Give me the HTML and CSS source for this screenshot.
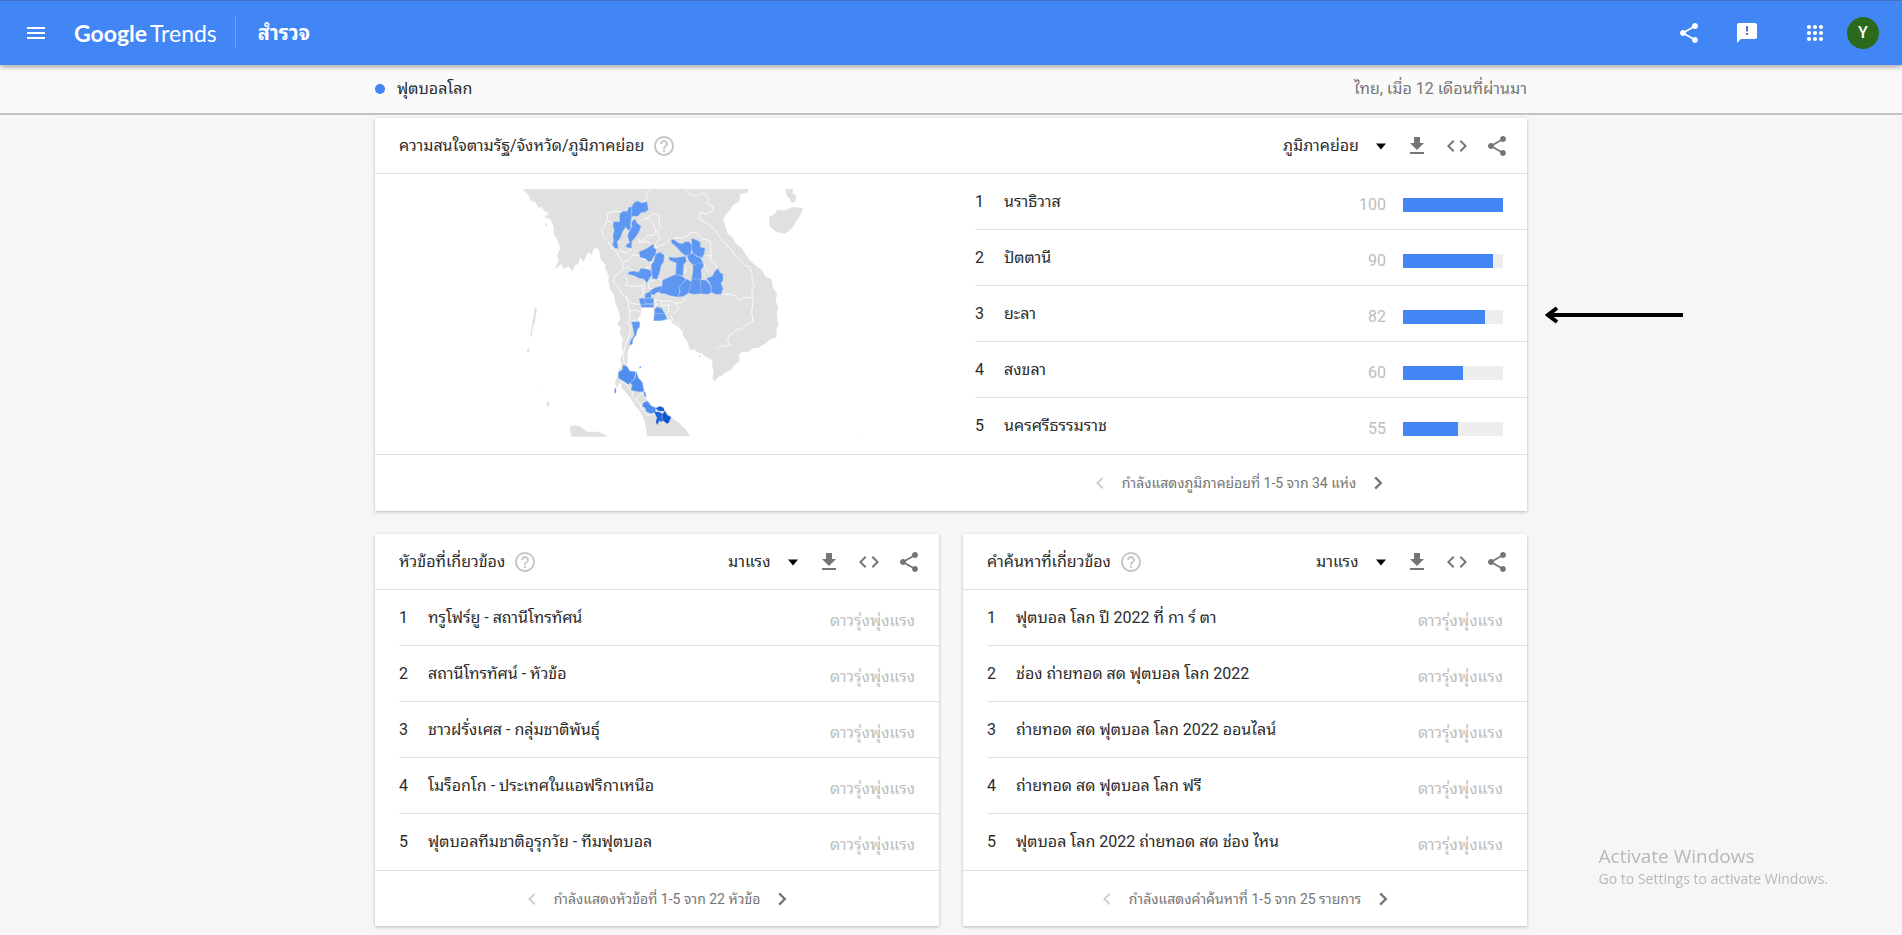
FILE: index.html
```html
<!DOCTYPE html>
<html lang="th">
<head>
<meta charset="utf-8">
<meta name="viewport" content="width=device-width, initial-scale=1">
<title>Google Trends - สำรวจ</title>
<link rel="stylesheet" href="styles.css">
</head>
<body>
<svg class="sprite" aria-hidden="true">
  <symbol id="share" viewBox="0 0 24 24"><path d="M18 16.08c-.76 0-1.44.3-1.96.77L8.91 12.7c.05-.23.09-.46.09-.7s-.04-.47-.09-.7l7.05-4.11c.54.5 1.25.81 2.04.81 1.66 0 3-1.34 3-3s-1.34-3-3-3-3 1.34-3 3c0 .24.04.47.09.7L8.04 9.81C7.5 9.31 6.79 9 6 9c-1.66 0-3 1.34-3 3s1.34 3 3 3c.79 0 1.5-.31 2.04-.81l7.12 4.16c-.05.21-.08.43-.08.65 0 1.61 1.31 2.92 2.92 2.92s2.92-1.31 2.92-2.92-1.31-2.92-2.92-2.92z"/></symbol>
  <symbol id="download" viewBox="0 0 24 24"><path d="M19 9h-4V3H9v6H5l7 7 7-7zM5 18v2h14v-2H5z"/></symbol>
  <symbol id="code" viewBox="0 0 24 24"><path d="M9.4 16.6L4.8 12l4.6-4.6L8 6l-6 6 6 6 1.4-1.4zm5.2 0l4.600-4.600-4.600-4.600L16 6l6 6-6 6-1.400-1.400z"/></symbol>
  <symbol id="help" viewBox="0 0 24 24"><path d="M11 18h2v-2h-2v2zm1-16C6.480 2 2 6.480 2 12s4.480 10 10 10 10-4.480 10-10S17.520 2 12 2zm0 18c-4.410 0-8-3.590-8-8s3.590-8 8-8 8 3.590 8 8-3.590 8-8 8zm0-14c-2.210 0-4 1.790-4 4h2c0-1.100.9-2 2-2s2 .9 2 2c0 2-3 1.750-3 5h2c0-2.250 3-2.500 3-5 0-2.210-1.790-4-4-4z"/></symbol>
  <symbol id="caret" viewBox="0 0 24 24"><path d="M7 9.500h10l-5 6z"/></symbol>
  <symbol id="prev" viewBox="0 0 24 24"><path d="M15.410 7.410L14 6l-6 6 6 6 1.410-1.410L10.830 12z"/></symbol>
  <symbol id="next" viewBox="0 0 24 24"><path d="M8.400 16.800L13.200 12 8.400 7.200 10 5.600l6.400 6.400-6.400 6.400z"/></symbol>
</svg>

<header class="topbar">
  <button class="icon-btn menu" aria-label="เมนู"><svg viewBox="0 0 24 24"><path d="M3 18h18v-2H3v2zm0-5h18v-2H3v2zm0-7v2h18V6H3z"/></svg></button>
  <a class="logo" href="#"><span class="logo-google">Google</span> <span class="logo-trends">Trends</span></a>
  <h1 class="section-name">สำรวจ</h1>
  <div class="topbar-actions">
    <button class="icon-btn" aria-label="แชร์"><svg viewBox="0 0 24 24"><use href="#share"/></svg></button>
    <button class="icon-btn feedback" aria-label="ส่งความคิดเห็น"><svg viewBox="0 0 24 24"><path d="M20 2H4c-1.100 0-1.990.9-1.990 2L2 22l4-4h14c1.100 0 2-.9 2-2V4c0-1.100-.9-2-2-2z"/><path class="mark" d="M11 5h2v5.500h-2zM11 12h2v2h-2z"/></svg></button>
    <button class="icon-btn apps" aria-label="แอป"><svg viewBox="0 0 24 24"><circle cx="6" cy="6" r="2.100"/><circle cx="12" cy="6" r="2.100"/><circle cx="18" cy="6" r="2.100"/><circle cx="6" cy="12" r="2.100"/><circle cx="12" cy="12" r="2.100"/><circle cx="18" cy="12" r="2.100"/><circle cx="6" cy="18" r="2.100"/><circle cx="12" cy="18" r="2.100"/><circle cx="18" cy="18" r="2.100"/></svg></button>
    <button class="avatar" aria-label="บัญชี">Y</button>
  </div>
</header>

<div class="subbar">
  <div class="subbar-inner">
    <span class="term"><span class="dot"></span>ฟุตบอลโลก</span>
    <span class="scope">ไทย, เมื่อ 12 เดือนที่ผ่านมา</span>
  </div>
</div>

<main class="content">
  <section class="card wide">
    <div class="card-head">
      <h2>ความสนใจตามรัฐ/จังหวัด/ภูมิภาคย่อย</h2>
      <button class="icon-btn help" aria-label="ความช่วยเหลือ"><svg viewBox="0 0 24 24"><use href="#help"/></svg></button>
      <div class="tools">
        <label class="picker"><select aria-label="ระดับพื้นที่"><option>ภูมิภาคย่อย</option></select><svg viewBox="0 0 24 24"><use href="#caret"/></svg></label>
        <button class="icon-btn" aria-label="ดาวน์โหลด"><svg viewBox="0 0 24 24"><use href="#download"/></svg></button>
        <button class="icon-btn" aria-label="ฝัง"><svg viewBox="0 0 24 24"><use href="#code"/></svg></button>
        <button class="icon-btn" aria-label="แชร์"><svg viewBox="0 0 24 24"><use href="#share"/></svg></button>
      </div>
    </div>
    <div class="split">
      <div class="map">
        <svg viewBox="0 0 1080 810" role="img" aria-label="แผนที่ประเทศไทย">
          <g class="land">
            <path d="M42 30H720L714 42 694 45 692 66 672 78 664 92 652 105 642 122 650 145 657 165 672 178 680 193 700 209 712 230 735 256 758 272 770 294 788 300 792 326 804 342 800 366 808 386 803 405 808 436 802 452 803 474 780 484 768 495 745 507 730 508 720 518 700 518 690 527 692 545 675 558 668 572 650 580 640 590 626 594 618 607 610 600 614 575 609 560 611 544 588 532 580 524 566 520 556 512 542 512 535 487 522 470 520 456 505 442 492 434 484 420 472 424 436 425 433 388 398 386 396 405 386 420 393 432 388 454 378 462 368 496 356 516 356 544 352 560 362 575 383 578 388 600 402 614 405 638 411 656 416 668 432 684 440 686 452 682 465 690 486 714 510 732 530 750 543 772H414L410 742 405 722 392 695 378 680 364 656 350 640 338 626 334 610 322 628 318 608 326 592 328 574 338 560 334 540 342 520 338 500 342 480 332 464 336 446 324 436 334 420 328 392 320 374 314 348 303 330 298 306 300 292 288 268 290 256 276 244 270 214 258 204 246 228 238 218 224 248 212 236 208 256 198 258 190 278 178 262 164 270 158 254 136 272 150 246 144 230 154 206 142 176 134 166 134 144 124 120 106 114 120 104 106 96 98 84 88 86 80 70 64 66 60 52Z"/>
            <path d="M780 114 796 106 806 92 830 94 850 84 882 88 876 106 862 126 850 148 828 164 800 158 782 142Z"/>
            <path d="M828 30H852L850 42 862 50 858 70 846 70 842 58 834 54Z"/>
            <path d="M183 742 200 739 216 744 234 758 264 758 278 762 298 773H188L184 758Z"/>
            <path d="M76 388 84 386 78 428 70 450 68 476 64 470 67 448 72 422Z"/>
            <path d="M54 512 62 506 60 520 54 520ZM112 668 120 670 122 684 115 682ZM106 132 116 136 112 144ZM382 704 388 706 385 710ZM402 750 407 756 403 757ZM568 524 576 532 572 538ZM98 626 102 628 100 631ZM1057 770h4v3h-4Z"/>
          </g>
          <g class="borders">
            <path d="M424 32 412 42 416 56 404 66"/>
            <path d="M524 30 540 44 562 50 584 42 600 58 596 74 612 84 608 98 590 104 574 100 570 118 590 132 612 146 624 160 632 176 650 196 668 212 678 232 694 244 704 258 722 264 728 280 730 304 736 318 728 340 732 364 728 400 732 426 714 434 700 448 682 452 674 464 660 468 656 486 664 498 650 502 632 500 620 512"/>
            <path d="M452 108 450 130 454 146 444 160 452 178 438 196 440 206 466 196 484 180 504 176 522 178 548 160 562 162 578 178 604 186 606 208 606 244 622 260 628 272"/>
            <path d="M452 108 432 104 414 118 398 122M414 118 430 130 442 154 432 170 414 168 402 184 386 190M386 178 396 192 414 186 424 196"/>
            <path d="M332 98 310 96 296 104 294 126 286 142 278 152 282 172 298 188 306 206 324 218 330 234 340 250 342 268 334 280 318 292 314 308 326 322 336 342 352 354 358 372 360 390 364 406 358 430 366 442 360 470 350 494 342 530 346 556"/>
            <path d="M296 126 312 132M330 214 352 222 370 206M340 250 358 244 372 228 390 230 398 240 424 244 428 262 408 268M342 268 360 266 376 278M350 290 356 312 348 318 370 322 398 320 410 308M398 320 404 340 392 356M352 354 370 374 394 376M360 400 378 392 396 400M366 424 386 428M410 308 430 306 444 300 458 304M406 320 406 332M420 312 420 328 438 332"/>
            <path d="M466 226 480 238M526 284 530 266M552 264 560 250M580 250 590 264 598 280M606 230H590M640 346 666 346 680 352 690 364 706 356 728 356M532 354 516 372 500 372 484 366 456 366 434 360M434 360 442 374 438 386M456 366 460 380 480 378 478 398 470 408M500 372 508 388 496 404 486 396M456 338 446 350M484 410 498 430 514 440"/>
            <path d="M336 606 350 614 362 630 372 640M372 640 368 650 382 662 388 650 402 642M382 662 394 676 402 672M394 676 396 690 406 694M406 700 414 710 440 704"/>
          </g>
          <g class="blue">
            <path d="M368 84 374 72 386 66 398 72 414 68 418 92 408 100 398 100 386 112 368 112Z"/>
            <path d="M332 104 344 96 354 98 360 84 368 84 368 112 364 138 366 150 358 154 350 144 340 158 336 172 330 182 324 188 328 208 318 208 310 196 314 188 312 170 316 154 312 142 314 128 332 128Z"/>
            <path d="M368 128 378 120 384 132 396 142 390 158 380 174 368 188 368 208 350 204 354 194 362 192 356 172 360 158 368 146Z"/>
            <path d="M390 218 406 212 420 204 434 194 434 206 442 212 440 226 432 236 428 246 420 248 408 238 394 236Z"/>
            <path d="M440 226 452 220 460 224 466 228 464 248 456 260 452 280 444 302 430 298 428 278 426 258 434 248Z"/>
            <path d="M358 280 374 276 388 280 396 268 412 270 426 274 428 288 420 300 414 312 404 300 390 298 376 290 358 286Z"/>
            <path d="M486 180 498 184 508 192 520 194 528 188 540 188 548 198 548 212 544 226 530 230 516 220 508 210 500 202 488 192Z"/>
            <path d="M548 178 564 184 574 190 574 204 588 208 586 222 580 236 566 232 552 222 548 210Z"/>
            <path d="M478 234 498 236 530 232 532 248 524 256 522 290 500 286 502 252 482 244Z"/>
            <path d="M534 230 552 222 562 232 574 236 582 250 568 256 552 258 540 246Z"/>
            <path d="M552 258 582 250 584 262 576 272 578 300 548 300 552 278Z"/>
            <path d="M460 304 482 294 500 286 516 290 530 300 522 312 510 326 512 340 506 354 484 350 468 344 450 342 456 326 460 318Z"/>
            <path d="M522 312 532 300 548 308 544 326 538 342 524 352 506 354 514 340 510 326Z"/>
            <path d="M548 300 574 300 576 324 576 344 554 346 538 342 544 324Z"/>
            <path d="M574 302 592 304 604 318 608 340 596 346 576 344Z"/>
            <path d="M592 298 610 292 618 276 628 268 632 280 642 286 642 304 636 312 642 330 636 346 620 346 608 340 606 320 600 308Z"/>
            <path d="M424 334 438 326 458 320 456 336 440 342 436 348 426 346Z"/>
            <path d="M408 346 424 336 428 356 408 358ZM390 358H408V376H394ZM408 358H434V374H408ZM394 376H434V385H398Z"/>
            <path d="M438 388 446 384 458 388 468 404H436ZM436 404H468L474 420 456 425 434 425Z"/>
            <path d="M368 428 392 428 392 444 384 452 382 468 372 480 370 496 360 498 366 482 376 468Z"/>
          </g>
          <g class="blue south">
            <path d="M328 580 340 572 342 558 354 562 362 576 380 578 376 598 364 612 358 616 336 602 328 596Z"/>
            <path d="M382 578 388 596 400 610 405 638 388 638 366 634 370 618 364 612 378 598Z"/>
            <path d="M402 672 416 666 426 680 440 686 440 700 426 704 412 698 408 686 400 682ZM317 628h4v14h-4ZM391 564l5-2 0 5-4 1ZM404 640l4-2 4 16-5-2Z"/>
          </g>
          <path class="p90" d="M440 688 452 682 464 686 466 696 450 696Z"/>
          <path class="p82" d="M436 700 448 698 460 704 458 716 462 728 450 726 446 738 440 730 444 716Z"/>
          <path class="p100" d="M460 706 468 696 474 708 486 714 480 730 474 734 460 722Z"/>
        </svg>
      </div>
      <ol class="rows">
        <li><span class="rank">1</span><span class="name">นราธิวาส</span><span class="value">100</span><span class="bar"><span style="width:100%"></span></span></li>
        <li><span class="rank">2</span><span class="name">ปัตตานี</span><span class="value">90</span><span class="bar"><span style="width:90%"></span></span></li>
        <li><span class="rank">3</span><span class="name">ยะลา</span><span class="value">82</span><span class="bar"><span style="width:82%"></span></span></li>
        <li><span class="rank">4</span><span class="name">สงขลา</span><span class="value">60</span><span class="bar"><span style="width:60%"></span></span></li>
        <li><span class="rank">5</span><span class="name">นครศรีธรรมราช</span><span class="value">55</span><span class="bar"><span style="width:55%"></span></span></li>
      </ol>
    </div>
    <div class="pager half">
      <button class="icon-btn" aria-label="ก่อนหน้า" disabled><svg viewBox="0 0 24 24"><use href="#prev"/></svg></button>
      <span>กำลังแสดงภูมิภาคย่อยที่ 1-5 จาก 34 แห่ง</span>
      <button class="icon-btn" aria-label="ถัดไป"><svg viewBox="0 0 24 24"><use href="#next"/></svg></button>
    </div>
    <svg class="pointer" viewBox="0 0 140 20" aria-hidden="true"><path d="M138 10H4M12 3L3 10l9 7"/></svg>
  </section>

  <section class="card">
    <div class="card-head">
      <h2>หัวข้อที่เกี่ยวข้อง</h2>
      <button class="icon-btn help" aria-label="ความช่วยเหลือ"><svg viewBox="0 0 24 24"><use href="#help"/></svg></button>
      <div class="tools">
        <label class="picker"><select aria-label="การจัดเรียงหัวข้อ"><option>มาแรง</option></select><svg viewBox="0 0 24 24"><use href="#caret"/></svg></label>
        <button class="icon-btn" aria-label="ดาวน์โหลด"><svg viewBox="0 0 24 24"><use href="#download"/></svg></button>
        <button class="icon-btn" aria-label="ฝัง"><svg viewBox="0 0 24 24"><use href="#code"/></svg></button>
        <button class="icon-btn" aria-label="แชร์"><svg viewBox="0 0 24 24"><use href="#share"/></svg></button>
      </div>
    </div>
    <ol class="rows">
      <li><span class="rank">1</span><span class="name">ทรูโฟร์ยู - สถานีโทรทัศน์</span><span class="value">ดาวรุ่งพุ่งแรง</span></li>
      <li><span class="rank">2</span><span class="name">สถานีโทรทัศน์ - หัวข้อ</span><span class="value">ดาวรุ่งพุ่งแรง</span></li>
      <li><span class="rank">3</span><span class="name">ชาวฝรั่งเศส - กลุ่มชาติพันธุ์</span><span class="value">ดาวรุ่งพุ่งแรง</span></li>
      <li><span class="rank">4</span><span class="name">โมร็อกโก - ประเทศในแอฟริกาเหนือ</span><span class="value">ดาวรุ่งพุ่งแรง</span></li>
      <li><span class="rank">5</span><span class="name">ฟุตบอลทีมชาติอุรุกวัย - ทีมฟุตบอล</span><span class="value">ดาวรุ่งพุ่งแรง</span></li>
    </ol>
    <div class="pager">
      <button class="icon-btn" aria-label="ก่อนหน้า" disabled><svg viewBox="0 0 24 24"><use href="#prev"/></svg></button>
      <span>กำลังแสดงหัวข้อที่ 1-5 จาก 22 หัวข้อ</span>
      <button class="icon-btn" aria-label="ถัดไป"><svg viewBox="0 0 24 24"><use href="#next"/></svg></button>
    </div>
  </section>

  <section class="card">
    <div class="card-head">
      <h2>คำค้นหาที่เกี่ยวข้อง</h2>
      <button class="icon-btn help" aria-label="ความช่วยเหลือ"><svg viewBox="0 0 24 24"><use href="#help"/></svg></button>
      <div class="tools">
        <label class="picker"><select aria-label="การจัดเรียงคำค้นหา"><option>มาแรง</option></select><svg viewBox="0 0 24 24"><use href="#caret"/></svg></label>
        <button class="icon-btn" aria-label="ดาวน์โหลด"><svg viewBox="0 0 24 24"><use href="#download"/></svg></button>
        <button class="icon-btn" aria-label="ฝัง"><svg viewBox="0 0 24 24"><use href="#code"/></svg></button>
        <button class="icon-btn" aria-label="แชร์"><svg viewBox="0 0 24 24"><use href="#share"/></svg></button>
      </div>
    </div>
    <ol class="rows">
      <li><span class="rank">1</span><span class="name">ฟุตบอล โลก ปี 2022 ที่ กา ร์ ตา</span><span class="value">ดาวรุ่งพุ่งแรง</span></li>
      <li><span class="rank">2</span><span class="name">ช่อง ถ่ายทอด สด ฟุตบอล โลก 2022</span><span class="value">ดาวรุ่งพุ่งแรง</span></li>
      <li><span class="rank">3</span><span class="name">ถ่ายทอด สด ฟุตบอล โลก 2022 ออนไลน์</span><span class="value">ดาวรุ่งพุ่งแรง</span></li>
      <li><span class="rank">4</span><span class="name">ถ่ายทอด สด ฟุตบอล โลก ฟรี</span><span class="value">ดาวรุ่งพุ่งแรง</span></li>
      <li><span class="rank">5</span><span class="name">ฟุตบอล โลก 2022 ถ่ายทอด สด ช่อง ไหน</span><span class="value">ดาวรุ่งพุ่งแรง</span></li>
    </ol>
    <div class="pager">
      <button class="icon-btn" aria-label="ก่อนหน้า" disabled><svg viewBox="0 0 24 24"><use href="#prev"/></svg></button>
      <span>กำลังแสดงคำค้นหาที่ 1-5 จาก 25 รายการ</span>
      <button class="icon-btn" aria-label="ถัดไป"><svg viewBox="0 0 24 24"><use href="#next"/></svg></button>
    </div>
  </section>
</main>

<aside class="watermark">
  <p class="watermark-title">Activate Windows</p>
  <p>Go to Settings to activate Windows.</p>
</aside>
</body>
</html>
```

FILE: styles.css
```css
* {
  box-sizing: border-box;
}

body {
  margin: 0;
  background: #f6f6f6;
  color: #2b2b2b;
  font: 16px/24px Roboto, "Noto Sans Thai Looped", "Noto Looped Thai", Loma, Waree, Garuda, "Noto Sans Thai", sans-serif;
}

h1, h2, p, ol {
  margin: 0;
  padding: 0;
}

.sprite {
  position: absolute;
  width: 0;
  height: 0;
}

.icon-btn {
  display: block;
  flex: none;
  padding: 0;
  border: 0;
  background: none;
  color: #757575;
  line-height: 0;
}

.icon-btn svg {
  width: 24px;
  height: 24px;
  fill: currentColor;
}

/* Top bar */
.topbar {
  position: relative;
  z-index: 1;
  display: flex;
  align-items: center;
  height: 65px;
  padding: 0 23px 0 24px;
  border-top: 1px solid #3f73c0;
  background: #4285f4;
  color: #fff;
  box-shadow: 0 2px 5px rgba(0, 0, 0, .35);
}

.topbar .icon-btn {
  color: #fff;
}

.logo {
  display: flex;
  gap: 3px;
  margin-left: 26px;
  padding-right: 18px;
  border-right: 1px solid #6ea2f7;
  color: #fff;
  font: 23px/32px Lato, sans-serif;
  text-decoration: none;
}

.logo-google {
  font-weight: 700;
}

.section-name {
  margin-left: 22px;
  font-size: 20px;
  font-weight: 700;
  line-height: 32px;
}

.topbar-actions {
  display: flex;
  align-items: center;
  margin-left: auto;
}

.feedback {
  margin-left: 34px;
}

.feedback .mark {
  fill: #5b6fa8;
}

.apps {
  margin: 0 20px 0 44px;
}

.avatar {
  width: 32px;
  height: 32px;
  padding: 0;
  border: 0;
  border-radius: 50%;
  background: #2b6a1c;
  color: #fff;
  font: 500 16px/32px Roboto, sans-serif;
}

/* Search term summary */
.subbar {
  border-bottom: 2px solid #c2c2c2;
  background: #fafafa;
}

.subbar-inner,
.content {
  width: 100%;
  max-width: 1152px;
  margin: 0 auto;
}

.subbar-inner {
  display: flex;
  align-items: center;
  justify-content: space-between;
  height: 48px;
}

.term {
  display: flex;
  align-items: center;
  gap: 12px;
}

.dot {
  width: 10px;
  height: 10px;
  border-radius: 50%;
  background: #4285f4;
}

.scope {
  color: #757575;
}

/* Cards */
.content {
  display: grid;
  grid-template-columns: 1fr 1fr;
  gap: 23px 24px;
  padding: 3px 0 8px;
}

.card {
  background: #fff;
  box-shadow: 0 1px 3px rgba(0, 0, 0, .25);
}

.wide {
  position: relative;
  grid-column: 1 / -1;
}

.card-head {
  display: flex;
  align-items: center;
  height: 56px;
  padding: 0 18px 0 24px;
  border-bottom: 1px solid #e0e0e0;
}

.card-head h2 {
  font-size: 16px;
  font-weight: 400;
}

.help {
  margin-left: 8px;
  color: #c8c8c8;
}

.tools {
  display: flex;
  align-items: center;
  gap: 16px;
  margin-left: auto;
}

.picker {
  position: relative;
  display: flex;
  align-items: center;
  margin-right: -4px;
}

.picker select {
  appearance: none;
  padding: 0 34px 0 0;
  border: 0;
  background: none;
  color: inherit;
  font: inherit;
}

.picker svg {
  position: absolute;
  right: 0;
  width: 24px;
  height: 24px;
  pointer-events: none;
}

.split {
  display: grid;
  grid-template-columns: 1fr 1fr;
  border-bottom: 1px solid #e0e0e0;
}

.map {
  display: flex;
  align-items: center;
  padding-left: 134px;
}

.map svg {
  width: 360px;
  height: 270px;
}

.land {
  fill: #e0e0e0;
}

.borders {
  fill: none;
  stroke: #fafafa;
  stroke-width: 3;
  stroke-linejoin: round;
}

.blue {
  fill: #5e97f2;
  stroke: #b4cff9;
  stroke-width: 1;
}

.south {
  fill: #4f8def;
}

.p82 {
  fill: #1f67dc;
}

.p90 {
  fill: #155fda;
}

.p100 {
  fill: #0b55d4;
}

.rows {
  padding-left: 24px;
  list-style: none;
}

.rows li {
  display: flex;
  align-items: center;
  height: 56px;
  padding-right: 24px;
  border-bottom: 1px solid #e0e0e0;
}

.rows li:last-child {
  border-bottom: 0;
}

.rank {
  width: 29px;
}

.name {
  flex: 1;
}

.value {
  padding-top: 6px;
  color: #bdbdbd;
}

.bar {
  width: 100px;
  height: 14px;
  margin: 6px 0 0 17px;
  background: #eee;
}

.bar span {
  display: block;
  height: 100%;
  background: #4285f4;
}

.pager {
  display: flex;
  align-items: center;
  justify-content: center;
  gap: 10px;
  height: 56px;
  border-top: 1px solid #e0e0e0;
  color: #757575;
  font-size: 14px;
}

.pager .icon-btn:disabled {
  color: #cfcfcf;
}

.half {
  margin-left: 50%;
  border-top: 0;
}

/* Annotation arrow beside the third region */
.pointer {
  position: absolute;
  top: 187px;
  left: calc(100% + 18px);
  width: 140px;
  height: 20px;
  fill: none;
  stroke: #000;
  stroke-width: 4;
}

.watermark {
  position: fixed;
  right: 74px;
  bottom: 46px;
  color: #b8b8b8;
  font: 14px/20px "Open Sans", sans-serif;
}

.watermark-title {
  font-size: 19px;
  line-height: 26px;
}
```
